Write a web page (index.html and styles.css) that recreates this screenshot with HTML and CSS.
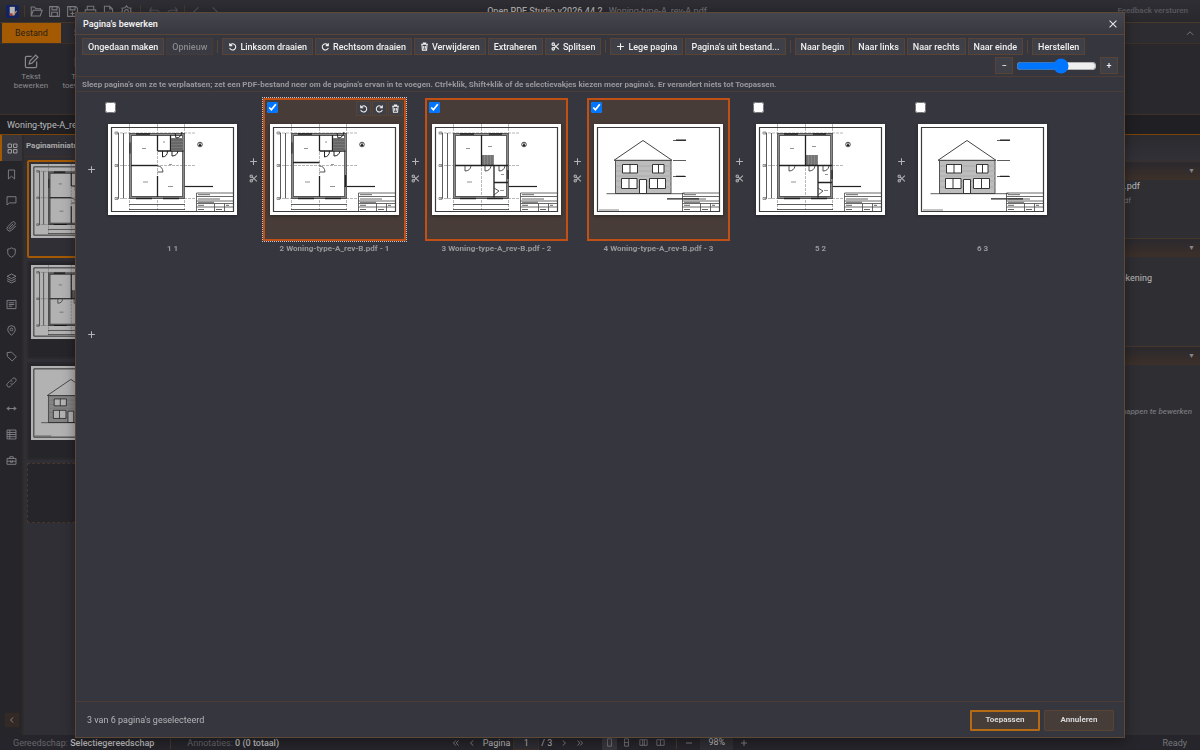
FILE: index.html
```html
<!DOCTYPE html>
<html lang="nl">
<head>
<meta charset="utf-8">
<title>Open PDF Studio</title>
<link rel="stylesheet" href="styles.css">
</head>
<body>
<svg class="sprite" aria-hidden="true">
  <defs>
    <symbol id="i-folder" viewBox="0 0 16 16"><path d="M1.5 13.5v-11h4l1.500 2h6v2M1.500 13.500 4 6.500h11l-2.500 7z"/></symbol>
    <symbol id="i-save" viewBox="0 0 16 16"><path d="M2 2h10l2 2v10H2zM5 2v4h6V2M4.500 14V9h7v5"/></symbol>
    <symbol id="i-saveas" viewBox="0 0 16 16"><path d="M2 2h10l2 2v10H2zM5 2v4h6V2M8 8v5M5.500 10.500h5"/></symbol>
    <symbol id="i-print" viewBox="0 0 16 16"><path d="M4 6V1.500h8V6M4 12H1.500V6h13v6H12M4 9.500h8v5H4z"/></symbol>
    <symbol id="i-page" viewBox="0 0 16 16"><path d="M3 1.500h6.500L13 5v9.500H3zM9.500 1.500V5H13M5.500 9h5M5.500 12h5"/></symbol>
    <symbol id="i-gear" viewBox="0 0 16 16"><path d="M8 1l2 2.500 3.500.5-.5 3.500 2 2.500-3 1.500L11 14l-3-1-3 1-1-2.500-3-1.500 2-2.500L2.500 4 6 3.500z"/><circle cx="8" cy="8" r="2.300"/></symbol>
    <symbol id="i-undo" viewBox="0 0 16 16"><path d="M5 3 2 6.500 5 10M2 6.500h8a4 4 0 0 1 4 4"/></symbol>
    <symbol id="i-redo" viewBox="0 0 16 16"><path d="m11 3 3 3.500-3 3.500M14 6.500H6a4 4 0 0 0-4 4"/></symbol>
    <symbol id="i-left" viewBox="0 0 16 16"><path d="M10.500 3 5 8l5.500 5"/></symbol>
    <symbol id="i-right" viewBox="0 0 16 16"><path d="M5.500 3 11 8l-5.500 5"/></symbol>
    <symbol id="i-up" viewBox="0 0 16 16"><path d="m3 11 5-5 5 5"/></symbol>
    <symbol id="i-first" viewBox="0 0 16 16"><path d="M7.500 3 3 8l4.500 5M13 3 8.500 8l4.500 5"/></symbol>
    <symbol id="i-last" viewBox="0 0 16 16"><path d="M3 3l4.500 5L3 13M8.500 3 13 8l-4.500 5"/></symbol>
    <symbol id="i-edit" viewBox="0 0 16 16"><path d="M8 2.500H3A1.500 1.500 0 0 0 1.500 4v9A1.500 1.500 0 0 0 3 14.500h9a1.500 1.500 0 0 0 1.500-1.500V8M12.500 1.200l2.300 2.300L8.500 9.800l-3 .8.800-3z"/></symbol>
    <symbol id="i-grid" viewBox="0 0 16 16"><path d="M1.500 1.500h5v5h-5zM9.500 1.500h5v5h-5zM1.500 9.500h5v5h-5zM9.500 9.500h5v5h-5z"/></symbol>
    <symbol id="i-mark" viewBox="0 0 16 16"><path d="M3.500 1.500h9v13L8 10.500l-4.500 4z"/></symbol>
    <symbol id="i-chat" viewBox="0 0 16 16"><path d="M1.500 2.500h13v9H5l-3.500 3z"/></symbol>
    <symbol id="i-clip" viewBox="0 0 16 16"><path d="m14.500 7-6.500 6.500a3.800 3.800 0 0 1-5.400-5.400L9 1.800A2.500 2.500 0 0 1 12.700 5.400L6.500 11.600a1.300 1.300 0 0 1-1.800-1.800l5.700-5.700"/></symbol>
    <symbol id="i-shield" viewBox="0 0 16 16"><path d="M8 1.200c2 1.300 3.500 1.800 5.500 1.800v5c0 3.500-2.500 5.500-5.500 6.800C5 13.500 2.500 11.500 2.500 8V3C4.500 3 6 2.500 8 1.200z"/></symbol>
    <symbol id="i-layers" viewBox="0 0 16 16"><path d="m8 1.500 6.500 3.300L8 8 1.500 4.800zM1.500 8 8 11.300 14.500 8M1.500 11.200 8 14.500l6.500-3.300"/></symbol>
    <symbol id="i-form" viewBox="0 0 16 16"><path d="M1.500 2h13v12h-13zM4 5.500h8M4 8h8M4 10.500h5"/></symbol>
    <symbol id="i-pin" viewBox="0 0 16 16"><path d="M8 15C5 12 2.500 9.500 2.500 6.500a5.500 5.500 0 0 1 11 0C13.500 9.500 11 12 8 15z"/><circle cx="8" cy="6.500" r="2"/></symbol>
    <symbol id="i-tag" viewBox="0 0 16 16"><path d="M1.500 2.500 8 1.500 15 8.500 9 14.500 2 8z"/></symbol>
    <symbol id="i-link" viewBox="0 0 16 16"><path d="M6.500 9.500a3 3 0 0 0 4.500 0l2.800-2.800A3 3 0 0 0 9.500 2.300L8 3.800M9.500 6.500a3 3 0 0 0-4.500 0L2.200 9.300a3 3 0 0 0 4.300 4.400L8 12.200"/></symbol>
    <symbol id="i-width" viewBox="0 0 16 16"><path d="M1.500 8h13M4 5.500 1.500 8 4 10.500zM12 5.500 14.500 8 12 10.500z"/></symbol>
    <symbol id="i-table" viewBox="0 0 16 16"><path d="M1.500 1.500h13v13h-13zM5.500 1.500v13M1.500 5h13M1.500 8h13M1.500 11.200h13"/></symbol>
    <symbol id="i-case" viewBox="0 0 16 16"><path d="M1.500 5h13v8.500h-13zM5.500 5V2.500h5V5M1.500 9h13M6.500 8v2.500h3V8"/></symbol>
    <symbol id="i-ccw" viewBox="0 0 16 16"><path d="M3 2v4.500h4.500M3.300 6.300A5.500 5.500 0 1 1 3 10.500"/></symbol>
    <symbol id="i-cw" viewBox="0 0 16 16"><path d="M13 2v4.500H8.500M12.700 6.300A5.500 5.500 0 1 0 13 10.500"/></symbol>
    <symbol id="i-trash" viewBox="0 0 16 16"><path d="M2 4h12M6 3.500V2h4v1.500M3.500 4.500l.8 10h7.400l.8-10M6.500 7v5M9.500 7v5"/></symbol>
    <symbol id="i-cut" viewBox="0 0 16 16"><circle cx="4" cy="3.800" r="2.200"/><circle cx="4" cy="12.200" r="2.200"/><path d="M5.700 5.200 14 13M5.700 10.800 14 3"/></symbol>
    <symbol id="i-plus" viewBox="0 0 16 16"><path d="M8 2v12M2 8h12"/></symbol>
    <symbol id="i-minus" viewBox="0 0 16 16"><path d="M2 8h12"/></symbol>
    <symbol id="i-close" viewBox="0 0 16 16"><path d="m2.500 2.500 11 11M13.500 2.500l-11 11"/></symbol>
    <symbol id="i-v1" viewBox="0 0 16 16"><path d="M4.500 1.500h7v13h-7z"/></symbol>
    <symbol id="i-v2" viewBox="0 0 16 16"><path d="M4.500 1.500h7v13h-7zM4.500 8h7"/></symbol>
    <symbol id="i-v3" viewBox="0 0 16 16"><path d="M1.500 3h13v10h-13zM6.500 3v10M9.500 3v10"/></symbol>
    <symbol id="i-v4" viewBox="0 0 16 16"><path d="M1.500 3h13v10h-13zM8 3v10"/></symbol>

    <g id="sheet">
      <path fill="#fff" d="M0 0h129v91H0z"/>
      <path d="M3.500 3.500h122v84H3.500z" fill="none" stroke="#3c3c3c" stroke-width="1.200"/>
      <path d="M88.500 69h37M88.500 69v18M88.500 72.500h37M88.500 77h37M88.500 79.500h37M88.500 83h37M106.500 79.500V87M116.500 79.500V87" fill="none" stroke="#444" stroke-width=".8"/>
      <path d="M90 70.700h12M90 75h22M90 78.300h16M90 81.300h6M90 85.500h6M108 85.500h6M118 81.300h3" stroke="#555" stroke-width=".9"/>
    </g>
    <g id="axes" fill="none">
      <path d="M21.500 0v86M49.500 0v86M76.500 0v86M8 9h79M8 41.500h79M8 74.500h79" stroke="#888" stroke-width=".6" stroke-dasharray="3 1"/>
      <path d="M10.500 9v65.500M15.500 9v65.500M21 80.500h56M21 85.500h56" stroke="#333" stroke-width=".8"/>
      <path d="M7 8h3v2H7zM7 40.500h3v2H7zM7 73.500h3v2H7z" stroke="#555" stroke-width=".6"/>
      <circle cx="92" cy="20.500" r="2.300" stroke="#333" stroke-width=".9"/><path d="M92 18.500l1.500 3.500h-3z" fill="#222"/>
      <path d="M74 62.500h31" stroke="#222" stroke-width="1.200"/>
      <path d="M22.500 10.500h53v63h-53z" stroke="#555" stroke-width="2.800"/>
      <path d="M22.500 10.500h53v63h-53z" stroke="#999" stroke-width=".8"/>
      <path d="M28 10h14M28 74.500h16M55 74.500h16" stroke="#222" stroke-width="1.300"/>
      <path d="M34 24.500h4M35 58h5" stroke="#777" stroke-width=".8"/>
    </g>
    <g id="ground" fill="none" stroke="#222" stroke-width="1">
      <path d="M49.500 11v16M49.500 27h26M62.500 11v16M49.500 52v21" stroke-width="1.300"/>
      <path d="M63 14h12v12.500H63z" fill="#777" stroke="none"/><path d="M63 16h12M63 19h12M63 22h12M63 25h12" stroke="#444" stroke-width=".6"/>
      <path d="M54.500 27v6q5-.5 5-6M64 27v5q5 0 6-5M67 9l1 5q5 0 6-6M22 18.500v11"/>
      <path d="M49.500 42q5 0 5.500 6h-5.500" stroke="#555"/>
      <path d="M55 18h2M61 40.500h3M60 62.500h5" stroke="#777" stroke-width=".8"/>
    </g>
    <symbol id="plan-a" viewBox="0 0 129 91"><use href="#sheet"/><use href="#axes"/><use href="#ground"/><path d="M23 41.500h26.500" stroke="#222" stroke-width="1.400"/></symbol>
    <symbol id="plan-b" viewBox="0 0 129 91"><use href="#sheet"/><use href="#axes"/><use href="#ground"/><path d="M23 38.500h26.500M75.500 51v12" stroke="#222" stroke-width="1.400"/></symbol>
    <symbol id="plan-up" viewBox="0 0 129 91"><use href="#sheet"/><use href="#axes"/>
      <path d="M49.500 31h12.500v10.500H49.500z" fill="#888"/><path d="M51 31v10.500M54 31v10.500M57 31v10.500M60 31v10.500" stroke="#555" stroke-width=".7"/>
      <g fill="none" stroke="#222"><path d="M49.500 11v30.500M23 41.500h53M62 41.500v32M62 58.500h14M57 10h13M76 46v9" stroke-width="1.300"/>
      <path d="M33 42v5q5 0 6-5M53 42v5q5 0 6-5M67 42v5q5 0 6-5M62 64l5 3-5 4" stroke="#444" stroke-width=".9"/><path d="M56 22.500h4M69 50.500h3M68 66.500h4" stroke="#777" stroke-width=".8"/></g></symbol>
    <symbol id="house" viewBox="0 0 129 91"><use href="#sheet"/>
      <path d="M21.500 36.500H77v33H21.500z" fill="#bdbdbd" stroke="#444" stroke-width=".9"/>
      <path d="M22 42h55M22 47h55M22 52h55M22 57h55M22 63h55" stroke="#aaa" stroke-width="1"/>
      <path d="M20 36.300 49 16.500l29 19.800z" fill="#fff" stroke="#444" stroke-width="1"/>
      <g fill="#fff" stroke="#222" stroke-width=".9"><path d="M28.500 40.500h15v8.500h-15zM36 40.500V49M58.500 40.500H70V49H58.500zM64.500 40.500V49M27.500 54.500H43v10H27.500zM35 54.500v10M55.500 54.500h16v10h-16zM63.500 54.500v10M45.500 55.500h7v14h-7z"/></g>
      <path d="M12.500 69.700h78M79 36.500h13M79 52.500h13M79 16.500h13" stroke="#333" stroke-width=".8"/>
      <path d="M82 16.200h10M82 52.300h9M73 74.800h32" stroke="#222" stroke-width="1.200"/><path d="M5 86h20" stroke="#555" stroke-width=".7"/></symbol>
  </defs>
</svg>

<div class="app">
  <header class="titlebar">
    <div class="quick">
      <svg class="logo" viewBox="0 0 14 14"><rect width="14" height="14" rx="1" fill="#12245f"/><path d="M4 2h5.500v9H4z" fill="#b9b6b9"/><path d="M4 9h3v2.500H4z" fill="#a33a35"/><path d="m7 11 4-5 1 1-4 4.500z" fill="#b88a55"/></svg>
      <i class="bar"></i>
      <svg class="icon"><use href="#i-folder"/></svg><svg class="icon"><use href="#i-save"/></svg><svg class="icon"><use href="#i-saveas"/></svg><svg class="icon"><use href="#i-print"/></svg><svg class="icon"><use href="#i-page"/></svg><svg class="icon"><use href="#i-gear"/></svg>
      <i class="bar wide"></i>
      <svg class="icon faint"><use href="#i-undo"/></svg><svg class="icon faint"><use href="#i-redo"/></svg>
      <i class="bar"></i>
      <svg class="icon faint"><use href="#i-left"/></svg><svg class="icon faint"><use href="#i-right"/></svg>
    </div>
    <div class="doc-title"><b>Open PDF Studio v2026.44.2</b><span>Woning-type-A_rev-A.pdf</span></div>
    <a class="feedback" href="#">Feedback versturen</a>
  </header>
  <nav class="tabs"><button class="tab active">Bestand</button><button class="tab">Start</button><svg class="icon collapse"><use href="#i-up"/></svg></nav>
  <section class="ribbon">
    <button class="tool"><svg class="icon big"><use href="#i-edit"/></svg>Tekst<br>bewerken</button>
    <button class="tool"><svg class="icon big"><use href="#i-edit"/></svg>Tekst<br>toevoegen</button>
  </section>
  <div class="doctabs">Woning-type-A_rev-A.pdf</div>
  <div class="workspace">
    <nav class="rail">
      <button class="active" aria-label="Miniaturen"><svg class="icon"><use href="#i-grid"/></svg></button>
      <button aria-label="Bladwijzers"><svg class="icon"><use href="#i-mark"/></svg></button>
      <button aria-label="Opmerkingen"><svg class="icon"><use href="#i-chat"/></svg></button>
      <button aria-label="Bijlagen"><svg class="icon"><use href="#i-clip"/></svg></button>
      <button aria-label="Beveiliging"><svg class="icon"><use href="#i-shield"/></svg></button>
      <button aria-label="Lagen"><svg class="icon"><use href="#i-layers"/></svg></button>
      <button aria-label="Formulier"><svg class="icon"><use href="#i-form"/></svg></button>
      <button aria-label="Locaties"><svg class="icon"><use href="#i-pin"/></svg></button>
      <button aria-label="Labels"><svg class="icon"><use href="#i-tag"/></svg></button>
      <button aria-label="Koppelingen"><svg class="icon"><use href="#i-link"/></svg></button>
      <button aria-label="Maten"><svg class="icon"><use href="#i-width"/></svg></button>
      <button aria-label="Tabel"><svg class="icon"><use href="#i-table"/></svg></button>
      <button aria-label="Gereedschap"><svg class="icon"><use href="#i-case"/></svg></button>
      <button class="fold" aria-label="Inklappen"><svg class="icon tiny"><use href="#i-left"/></svg></button>
    </nav>
    <aside class="thumbs">
      <h2>Paginaminiaturen</h2>
      <div class="thumb-list">
        <div class="thumb active"><svg viewBox="0 0 129 91"><use href="#plan-a"/></svg></div>
        <div class="thumb"><svg viewBox="0 0 129 91"><use href="#plan-up"/></svg></div>
        <div class="thumb"><svg viewBox="0 0 129 91"><use href="#house"/></svg></div>
        <div class="drop"></div>
      </div>
    </aside>
    <div class="canvas"></div>
    <aside class="props">
      <div class="props-head"></div>
      <section class="group first"><h3>▼</h3><p class="value">Woning-type-A_rev-A.pdf</p><p class="sub">Woning-type-A_rev-A.pdf</p></section>
      <section class="group second"><h3>▼</h3><p class="value">Tekening</p></section>
      <section class="group third"><h3>▼</h3><p class="note">Selecteer om eigenschappen te bewerken</p></section>
    </aside>
  </div>
  <footer class="status">
    <div class="status-left"><span>Gereedschap: <b>Selectiegereedschap</b></span><i class="bar"></i><span>Annotaties: <b>0 (0 totaal)</b></span></div>
    <div class="status-mid">
      <svg class="icon nav"><use href="#i-first"/></svg><svg class="icon nav"><use href="#i-left"/></svg>
      <label for="pg">Pagina</label><input id="pg" value="1"><span>/ 3</span>
      <svg class="icon nav"><use href="#i-right"/></svg><svg class="icon nav"><use href="#i-last"/></svg>
      <div class="views"><button class="on" aria-label="Enkele pagina"><svg class="icon"><use href="#i-v1"/></svg></button><button aria-label="Doorlopend"><svg class="icon"><use href="#i-v2"/></svg></button><button aria-label="Boek"><svg class="icon"><use href="#i-v3"/></svg></button><button aria-label="Twee pagina's"><svg class="icon"><use href="#i-v4"/></svg></button></div>
      <i class="bar"></i>
      <svg class="icon nav"><use href="#i-minus"/></svg><span class="pct">98%</span><svg class="icon nav"><use href="#i-plus"/></svg>
    </div>
    <span class="ready">Ready</span>
  </footer>
</div>

<div class="modal" role="dialog" aria-labelledby="dlg-title">
  <header class="modal-head"><h1 id="dlg-title">Pagina's bewerken</h1><button class="close" aria-label="Sluiten"><svg class="icon"><use href="#i-close"/></svg></button></header>
  <div class="toolbar">
    <button class="btn">Ongedaan maken</button><button class="btn" disabled>Opnieuw</button>
    <i class="sep"></i>
    <button class="btn"><svg class="icon"><use href="#i-ccw"/></svg>Linksom draaien</button><button class="btn"><svg class="icon"><use href="#i-cw"/></svg>Rechtsom draaien</button><button class="btn"><svg class="icon"><use href="#i-trash"/></svg>Verwijderen</button><button class="btn">Extraheren</button><button class="btn"><svg class="icon"><use href="#i-cut"/></svg>Splitsen</button>
    <i class="sep"></i>
    <button class="btn"><svg class="icon"><use href="#i-plus"/></svg>Lege pagina</button><button class="btn">Pagina's uit bestand...</button>
    <i class="sep"></i>
    <button class="btn">Naar begin</button><button class="btn">Naar links</button><button class="btn">Naar rechts</button><button class="btn">Naar einde</button>
    <i class="sep"></i>
    <button class="btn">Herstellen</button>
    <div class="zoom"><button class="btn square" aria-label="Kleiner">−</button><input type="range" min="0" max="100" value="57" aria-label="Grootte"><button class="btn square" aria-label="Groter">+</button></div>
  </div>
  <p class="hint">Sleep pagina's om ze te verplaatsen; zet een PDF-bestand neer om de pagina's ervan in te voegen. Ctrl+klik, Shift+klik of de selectievakjes kiezen meer pagina's. Er verandert niets tot Toepassen.</p>
  <div class="pages">
    <div class="cell"><div class="gap"><svg class="icon"><use href="#i-plus"/></svg></div><figure><div class="tile"><input type="checkbox" aria-label="Pagina 1"><svg class="sheet" viewBox="0 0 129 91"><use href="#plan-a"/></svg></div><figcaption>1 1</figcaption></figure></div>
    <div class="cell"><div class="gap"><svg class="icon"><use href="#i-plus"/></svg><svg class="icon"><use href="#i-cut"/></svg></div><figure><div class="tile selected focus"><input type="checkbox" checked aria-label="Pagina 2"><div class="mini"><button aria-label="Linksom draaien"><svg class="icon"><use href="#i-ccw"/></svg></button><button aria-label="Rechtsom draaien"><svg class="icon"><use href="#i-cw"/></svg></button><button aria-label="Verwijderen"><svg class="icon"><use href="#i-trash"/></svg></button></div><svg class="sheet" viewBox="0 0 129 91"><use href="#plan-b"/></svg></div><figcaption>2 Woning-type-A_rev-B.pdf - 1</figcaption></figure></div>
    <div class="cell"><div class="gap"><svg class="icon"><use href="#i-plus"/></svg><svg class="icon"><use href="#i-cut"/></svg></div><figure><div class="tile selected"><input type="checkbox" checked aria-label="Pagina 3"><svg class="sheet" viewBox="0 0 129 91"><use href="#plan-up"/></svg></div><figcaption>3 Woning-type-A_rev-B.pdf - 2</figcaption></figure></div>
    <div class="cell"><div class="gap"><svg class="icon"><use href="#i-plus"/></svg><svg class="icon"><use href="#i-cut"/></svg></div><figure><div class="tile selected"><input type="checkbox" checked aria-label="Pagina 4"><svg class="sheet" viewBox="0 0 129 91"><use href="#house"/></svg></div><figcaption>4 Woning-type-A_rev-B.pdf - 3</figcaption></figure></div>
    <div class="cell"><div class="gap"><svg class="icon"><use href="#i-plus"/></svg><svg class="icon"><use href="#i-cut"/></svg></div><figure><div class="tile"><input type="checkbox" aria-label="Pagina 5"><svg class="sheet" viewBox="0 0 129 91"><use href="#plan-up"/></svg></div><figcaption>5 2</figcaption></figure></div>
    <div class="cell"><div class="gap"><svg class="icon"><use href="#i-plus"/></svg><svg class="icon"><use href="#i-cut"/></svg></div><figure><div class="tile"><input type="checkbox" aria-label="Pagina 6"><svg class="sheet" viewBox="0 0 129 91"><use href="#house"/></svg></div><figcaption>6 3</figcaption></figure></div>
    <div class="cell"><div class="gap"><svg class="icon"><use href="#i-plus"/></svg></div></div>
  </div>
  <footer class="modal-foot"><span>3 van 6 pagina's geselecteerd</span><button class="action primary">Toepassen</button><button class="action">Annuleren</button></footer>
</div>
</body>
</html>
```
FILE: styles.css
```css
* { box-sizing: border-box; }
body {
  margin: 0;
  background: #26252a;
  color: #aaa;
  font: 9px/12px Roboto, "Noto Sans", sans-serif;
  overflow: hidden;
}
button, input { font: inherit; color: inherit; margin: 0; }
button { padding: 0; border: 0; background: none; }
h1, h2, h3, p, figure { margin: 0; font-size: inherit; }
b { font-weight: 500; }
.sprite { position: absolute; width: 0; height: 0; }
.icon { display: block; flex: none; width: 12px; height: 12px; fill: none; stroke: currentColor; stroke-width: 1.300; }
.bar { flex: none; width: 1px; height: 12px; background: #48372b; }

/* application window */
.app { display: flex; flex-direction: column; height: 100vh; }
.titlebar {
  display: grid;
  grid-template-columns: 1fr auto 1fr;
  align-items: center;
  height: 23px;
  padding: 0 12px 0 6px;
  background: linear-gradient(#2f2e34, #29282d);
  border-bottom: 1px solid #48372b;
}
.quick { display: flex; align-items: center; gap: 5px; color: #7b7b7f; }
.quick .icon { width: 13px; height: 13px; }
.quick .faint { color: #505056; }
.quick .wide { margin: 0 2px; }
.logo { width: 13px; height: 13px; }
.doc-title { display: flex; gap: 6px; color: #aaa; }
.doc-title span { color: #77777b; }
.feedback { justify-self: end; color: #57575c; text-decoration: none; font-size: 8px; font-weight: 600; }
.tabs { display: flex; align-items: center; height: 21px; padding-left: 2px; border-bottom: 1px solid #3d3029; background: #2d2c31; }
.tab { height: 20px; padding: 0 13px; color: #8a8a8e; }
.tab.active { background: #a35a02; color: #2c2018; }
.collapse { width: 10px; height: 10px; margin: 0 5px 0 auto; color: #85858a; }
.ribbon { display: flex; align-items: flex-start; height: 71px; padding: 10px 6px; background: #29282d; border-bottom: 1px solid #3d3029; }
.tool { flex: none; width: 50px; font-size: 8px; line-height: 9px; color: #8a8a8e; text-align: center; }
.big { width: 15px; height: 15px; margin: 0 auto 3px; }
.doctabs { height: 20px; padding: 4px 7px; background: #202024; color: #bbb; border-bottom: 1px solid #7b4504; }
.workspace { display: flex; flex: 1; min-height: 0; }
.rail { display: flex; flex-direction: column; width: 24px; background: #26252a; border-right: 2px solid #302b2b; color: #85858a; }
.rail button { display: grid; place-items: center; height: 26px; }
.rail .active { border-left: 2px solid #a35a02; background: #38373e; color: #aaa; }
.rail .icon { width: 11px; height: 11px; }
.rail .fold { width: 14px; height: 14px; margin: auto 0 8px 5px; background: #332a26; color: #aaa; }
.rail .tiny { width: 8px; height: 8px; }
.thumbs { width: 170px; background: #302f35; }
.thumbs h2 { height: 22px; padding: 5px 2px; color: #aaa; border-bottom: 1px solid #3d3029; font-size: 8px; font-weight: 700; }
.thumb-list { display: grid; gap: 3px; padding: 3px; }
.thumb { height: 98px; padding: 2px; border: 2px solid #2a292e; border-radius: 2px; background: #26252a; }
.thumb.active { border-color: #a35a02; background: #302f35; }
.thumb svg { display: block; height: 74px; filter: brightness(.7); }
.drop { height: 60px; border: 1px dashed #48372b; background: #26252a; }
.canvas { flex: 1; background: #242328; }
.props { width: 230px; background: #2f2e33; }
.props-head { height: 27px; background: linear-gradient(#2b2a2f, #323137); border-bottom: 1px solid #3d3029; }
.group { border-bottom: 1px solid #48372b; }
.group h3 { height: 18px; padding: 3px 5px; text-align: right; font-size: 7px; color: #85858a; background: linear-gradient(#2a292e, #3d3029); }
.group p { text-align: right; }
.first { height: 77px; }
.second { height: 108px; }
.third { border: 0; }
.value { color: #bbb; }
.first .value { padding-right: 60px; }
.sub { margin-top: 3px; padding-right: 69px; font-size: 8px; color: #77777b; }
.second .value { margin-top: 15px; padding-right: 48px; }
.note { margin-top: 41px; padding-right: 8px; font-size: 8px; font-weight: 500; font-style: italic; color: #77777b; }
.status {
  display: grid;
  grid-template-columns: 1fr auto 1fr;
  align-items: center;
  height: 15px;
  padding: 0 13px;
  background: #26252b;
  color: #66666b;
}
.status-left, .status-mid, .views { display: flex; align-items: center; }
.status-left { gap: 16px; }
.status b, .status-mid { color: #bbb; }
.status-mid { gap: 8px; }
.nav { width: 8px; height: 8px; color: #85858a; stroke-width: 1.800; }
.status-mid label { margin: 0 -5px 0 -1px; }
.status-mid input { width: 26px; height: 15px; border: 1px solid #3d3029; background: #2e2d33; text-align: center; padding: 0; }
.status-mid span { margin-left: -6px; }
.views { gap: 2px; margin-left: 10px; }
.views button { display: grid; place-items: center; width: 15px; height: 15px; color: #85858a; }
.views .on { background: #38373e; }
.views .icon { width: 9px; height: 9px; }
.status-mid .pct { width: 33px; margin: 0 -1px; text-align: center; background: #302f35; line-height: 15px; }
.ready { justify-self: end; color: #77777b; }

/* dialog */
.modal {
  position: fixed;
  inset: 12px 75px;
  display: flex;
  flex-direction: column;
  background: #36363f;
  border: 1px solid #5c4838;
  box-shadow: 0 3px 12px rgba(0, 0, 0, .4);
  color: #e6e6e8;
}
.modal-head {
  display: flex;
  align-items: center;
  justify-content: space-between;
  height: 22px;
  padding: 0 6px 0 7px;
  background: linear-gradient(#45454d, #383841);
  border-bottom: 1px solid #5a4437;
}
.modal-head h1 { font-weight: 600; color: #f0f0f0; }
.close .icon { width: 10px; height: 10px; stroke-width: 1.700; }
.toolbar { display: flex; flex-wrap: wrap; gap: 2px; padding: 3px 6px 2px; border-bottom: 1px solid #4d3d36; }
.btn {
  display: flex;
  align-items: center;
  gap: 3px;
  height: 17px;
  padding: 0 5px;
  border: 1px solid #584334;
  background: #3f3f47;
  color: #f0f0f0;
  font-weight: 500;
  white-space: nowrap;
}
.btn .icon { width: 9px; height: 9px; stroke-width: 1.900; }
.btn:disabled { border-color: #453b38; background: #3a3a42; color: #88888d; }
.sep { width: 1px; height: 13px; margin: 2px; background: #584334; }
.zoom { display: flex; align-items: center; gap: 3px; margin-left: auto; }
.zoom input { width: 81px; height: 12px; accent-color: #0075ff; }
.square { justify-content: center; width: 18px; padding: 0; }
.hint { height: 15px; padding: 2px 6px; border-bottom: 1px solid #493c37; font-size: 8px; font-weight: 700; color: #98989c; white-space: nowrap; }
.pages { flex: 1; display: flex; flex-wrap: wrap; align-content: flex-start; gap: 6px 0; padding: 6px; }
.cell { display: flex; width: 162px; height: 159px; }
.gap { display: flex; flex-direction: column; align-items: center; justify-content: center; gap: 8px; width: 19px; height: 143px; color: #b4b4b8; }
.gap .icon { width: 9px; height: 9px; stroke-width: 1.800; }
.tile { position: relative; display: grid; place-items: center; width: 143px; height: 143px; border: 2px solid transparent; }
.selected { border-color: #c15017; background: #473c37; }
.focus { outline: 1px dotted #c8c8cc; }
.tile input { position: absolute; left: 2px; top: 2px; width: 11px; height: 11px; accent-color: #0075ff; }
.mini { position: absolute; top: 1px; right: 1px; display: flex; gap: 1px; }
.mini button { display: grid; place-items: center; width: 15px; height: 15px; border: 1px solid #584334; background: #3f3f47; color: #f0f0f0; }
.mini .icon { width: 9px; height: 9px; stroke-width: 1.800; }
.sheet { display: block; width: 129px; height: 91px; box-shadow: 0 1px 3px rgba(0, 0, 0, .4); }
figcaption { padding-top: 2px; text-align: center; font-size: 8px; font-weight: 700; color: #98989c; }
.modal-foot { display: flex; align-items: center; gap: 4px; height: 36px; padding: 1px 10px 0 11px; border-top: 1px solid #4d3d36; color: #b4b4b8; }
.modal-foot span { margin-right: auto; }
.action { width: 70px; height: 21px; border: 1px solid #584334; border-radius: 1px; background: #463c38; color: #d8d8da; font-size: 8px; font-weight: 700; }
.primary { border: 2px solid #b46b14; }
```
